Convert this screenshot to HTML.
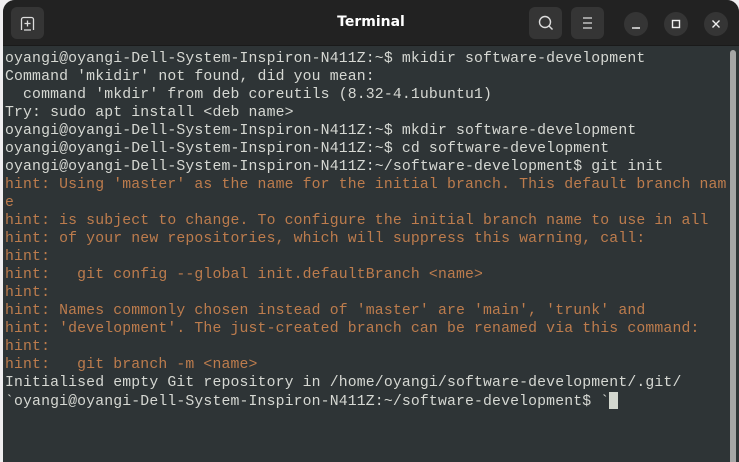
<!DOCTYPE html>
<html><head><meta charset="utf-8"><style>
html,body{margin:0;padding:0;width:739px;height:462px;overflow:hidden;background:#f0eef0;}
.win{position:absolute;left:3px;top:0;width:736px;height:462px;background:#2e3436;border-radius:12px 12px 0 0;overflow:hidden;}
.tb{position:absolute;left:0;top:0;width:736px;height:45px;background:#222222;border-bottom:1px solid #1a1a1a;}
.title{position:absolute;left:0;width:736px;top:0;text-align:center;color:#fff;font:bold 14px "DejaVu Sans","Liberation Sans",sans-serif;line-height:45px;}
.btn{position:absolute;top:7px;width:33px;height:32px;background:#353535;border-radius:6px;}
.cb{position:absolute;top:12px;width:24px;height:24px;background:#353535;border-radius:50%;}
svg{position:absolute;left:0;top:0}
.term{position:absolute;left:2px;top:50px;margin:0;font:14.8px "Liberation Mono",monospace;line-height:18px;letter-spacing:0.14px;color:#d6d8d3;white-space:pre;}
.h{color:#bd7c4d}
.sb{position:absolute;left:727px;top:50px;width:6px;height:420px;background:#a6a6a6;border-radius:3px;}
.cur{display:inline-block;width:9px;height:17px;background:#d3d7cf;vertical-align:-4px;}
</style></head><body>
<div class="win">
<div class="tb">
<div class="btn" style="left:8px"><svg width="33" height="32"><path d="M10.5 23V12.5a2 2 0 0 1 2-2h8a2 2 0 0 1 2 2V23M13 23h7M16.5 13.5v6M13.5 16.5h6" stroke="#ddd" stroke-width="1.3" fill="none"/></svg></div>
<div class="title">Terminal</div>
<div class="btn" style="left:526px"><svg width="33" height="32"><circle cx="16" cy="15" r="5.5" stroke="#ddd" stroke-width="1.4" fill="none"/><path d="M20 19l3.5 3.5" stroke="#ddd" stroke-width="1.4"/></svg></div>
<div class="btn" style="left:568px"><svg width="33" height="32"><path d="M12 11h9M12 16h9M12 21h9" stroke="#ddd" stroke-width="1.3"/></svg></div>
<div class="cb" style="left:621px"><svg width="24" height="24"><path d="M8 16h8" stroke="#eee" stroke-width="1.4"/></svg></div>
<div class="cb" style="left:661px"><svg width="24" height="24"><rect x="8.5" y="8.5" width="7" height="7" stroke="#eee" stroke-width="1.4" fill="none"/></svg></div>
<div class="cb" style="left:701px"><svg width="24" height="24"><path d="M8.5 8.5l7 7M15.5 8.5l-7 7" stroke="#eee" stroke-width="1.4"/></svg></div>
</div>
<pre class="term">oyangi@oyangi-Dell-System-Inspiron-N411Z:~$ mkidir software-development
Command 'mkidir' not found, did you mean:
  command 'mkdir' from deb coreutils (8.32-4.1ubuntu1)
Try: sudo apt install &lt;deb name&gt;
oyangi@oyangi-Dell-System-Inspiron-N411Z:~$ mkdir software-development
oyangi@oyangi-Dell-System-Inspiron-N411Z:~$ cd software-development
oyangi@oyangi-Dell-System-Inspiron-N411Z:~/software-development$ git init
<span class="h">hint: Using 'master' as the name for the initial branch. This default branch nam
e
hint: is subject to change. To configure the initial branch name to use in all
hint: of your new repositories, which will suppress this warning, call:
hint:
hint:   git config --global init.defaultBranch &lt;name&gt;
hint:
hint: Names commonly chosen instead of 'master' are 'main', 'trunk' and
hint: 'development'. The just-created branch can be renamed via this command:
hint:
hint:   git branch -m &lt;name&gt;</span>
Initialised empty Git repository in /home/oyangi/software-development/.git/
`oyangi@oyangi-Dell-System-Inspiron-N411Z:~/software-development$ `<span class="cur"></span></pre>
<div class="sb"></div>
</div>
</body></html>
